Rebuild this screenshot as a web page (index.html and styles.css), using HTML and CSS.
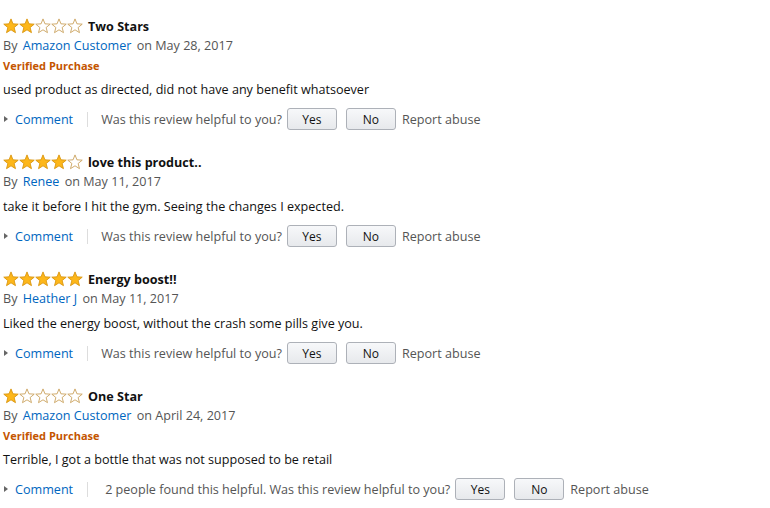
FILE: index.html
```html
<!DOCTYPE html>
<html>
<head>
    <title>Customer Reviews</title>
    <link rel="stylesheet" href="styles.css">
</head>
<body>

<svg class="defs" width="0" height="0">
    <symbol id="star" viewBox="0 0 16 16">
        <polygon points="8,0.9 9.94,5.83 15.23,6.15 11.14,9.52 12.47,14.65 8,11.8 3.53,14.65 4.86,9.52 0.77,6.15 6.06,5.83"/>
    </symbol>
</svg>

<div class="review">
    <div class="review-head">
        <span class="stars">
            <svg class="star full"><use href="#star"/></svg><svg class="star full"><use href="#star"/></svg><svg class="star"><use href="#star"/></svg><svg class="star"><use href="#star"/></svg><svg class="star"><use href="#star"/></svg>
        </span>
        <span class="review-title">Two Stars</span>
    </div>
    <div class="byline">By <a class="author" href="#">Amazon Customer</a> on May 28, 2017</div>
    <div class="verified">Verified Purchase</div>
    <div class="review-text">used product as directed, did not have any benefit whatsoever</div>
    <div class="actions">
        <a class="comment" href="#">Comment</a>
        <span class="sep"></span>
        <span class="helpful">Was this review helpful to you?</span>
        <button class="vote">Yes</button>
        <button class="vote">No</button>
        <a class="report" href="#">Report abuse</a>
    </div>
</div>

<div class="review">
    <div class="review-head">
        <span class="stars">
            <svg class="star full"><use href="#star"/></svg><svg class="star full"><use href="#star"/></svg><svg class="star full"><use href="#star"/></svg><svg class="star full"><use href="#star"/></svg><svg class="star"><use href="#star"/></svg>
        </span>
        <span class="review-title">love this product..</span>
    </div>
    <div class="byline">By <a class="author" href="#">Renee</a> on May 11, 2017</div>
    <div class="review-text">take it before I hit the gym. Seeing the changes I expected.</div>
    <div class="actions">
        <a class="comment" href="#">Comment</a>
        <span class="sep"></span>
        <span class="helpful">Was this review helpful to you?</span>
        <button class="vote">Yes</button>
        <button class="vote">No</button>
        <a class="report" href="#">Report abuse</a>
    </div>
</div>

<div class="review">
    <div class="review-head">
        <span class="stars">
            <svg class="star full"><use href="#star"/></svg><svg class="star full"><use href="#star"/></svg><svg class="star full"><use href="#star"/></svg><svg class="star full"><use href="#star"/></svg><svg class="star full"><use href="#star"/></svg>
        </span>
        <span class="review-title">Energy boost!!</span>
    </div>
    <div class="byline">By <a class="author" href="#">Heather J</a> on May 11, 2017</div>
    <div class="review-text">Liked the energy boost, without the crash some pills give you.</div>
    <div class="actions">
        <a class="comment" href="#">Comment</a>
        <span class="sep"></span>
        <span class="helpful">Was this review helpful to you?</span>
        <button class="vote">Yes</button>
        <button class="vote">No</button>
        <a class="report" href="#">Report abuse</a>
    </div>
</div>

<div class="review">
    <div class="review-head">
        <span class="stars">
            <svg class="star full"><use href="#star"/></svg><svg class="star"><use href="#star"/></svg><svg class="star"><use href="#star"/></svg><svg class="star"><use href="#star"/></svg><svg class="star"><use href="#star"/></svg>
        </span>
        <span class="review-title">One Star</span>
    </div>
    <div class="byline">By <a class="author" href="#">Amazon Customer</a> on April 24, 2017</div>
    <div class="verified">Verified Purchase</div>
    <div class="review-text">Terrible, I got a bottle that was not supposed to be retail</div>
    <div class="actions">
        <a class="comment" href="#">Comment</a>
        <span class="sep"></span>
        <span class="helpful with-count">2 people found this helpful. Was this review helpful to you?</span>
        <button class="vote">Yes</button>
        <button class="vote">No</button>
        <a class="report" href="#">Report abuse</a>
    </div>
</div>

</body>
</html>
```

FILE: styles.css
```css
body {
    font-family: 'Open Sans', 'DejaVu Sans', sans-serif;
    font-size: 12.6px;
    color: #111;
    background: #fff;
    margin: 0;
    padding: 16px 3px 0;
}
a {
    color: #0066c0;
    text-decoration: none;
}
.defs {
    position: absolute;
}

.review {
    margin-bottom: 22px;
}
.review:last-child {
    margin-bottom: 0;
}
.review-head {
    display: flex;
    align-items: center;
    height: 20px;
}
.stars {
    display: flex;
    margin-right: 5px;
}
.star {
    width: 16px;
    height: 16px;
    fill: #fff;
    stroke: #c9a25c;
    stroke-width: 0.9;
}
.star.full {
    fill: #fdb71a;
    stroke: #d9950e;
}
.review-title {
    font-weight: 700;
}

.byline {
    height: 20px;
    line-height: 20px;
    color: #555;
}
.author {
    margin: 0 2px;
}
.verified {
    height: 19px;
    line-height: 19px;
    font-size: 11px;
    font-weight: 700;
    color: #c45500;
}
.review-text {
    margin-top: 5px;
    height: 20px;
    line-height: 20px;
}

/* helpful row */
.actions {
    display: flex;
    align-items: center;
    height: 22px;
    margin-top: 8px;
    color: #555;
}
.comment {
    position: relative;
    padding-left: 12px;
}
.comment::before {
    content: "";
    position: absolute;
    left: 1px;
    top: 5px;
    border-left: 4px solid #666;
    border-top: 3.5px solid transparent;
    border-bottom: 3.5px solid transparent;
}
.sep {
    width: 1px;
    height: 15px;
    background: #ddd;
    margin: 0 13px 0 14px;
}
.helpful.with-count {
    margin-left: 4px;
}
.vote {
    font-family: inherit;
    font-size: 12px;
    color: #111;
    width: 50px;
    height: 22px;
    padding: 0;
    margin-left: 5px;
    border: 1px solid #adb1b8;
    border-radius: 3px;
    background: linear-gradient(#f7f8fa, #e7e9ec);
}
.vote + .vote {
    margin-left: 9px;
}
.report {
    color: #555;
    margin-left: 6px;
}
```
